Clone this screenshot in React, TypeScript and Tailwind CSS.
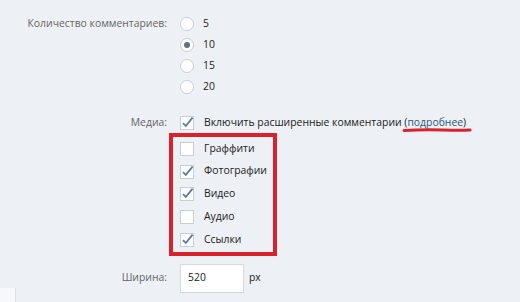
import React from "react";

function Radio({ checked }: { checked?: boolean }) {
  return (
    <span className="w-[14px] h-[14px] rounded-full border border-[#c8ced6] bg-white flex items-center justify-center shrink-0">
      {checked && <span className="w-[6px] h-[6px] rounded-full bg-[#5d7189]" />}
    </span>
  );
}

function Check({ checked }: { checked?: boolean }) {
  return (
    <svg width="15" height="15" viewBox="0 0 15 15" className="shrink-0">
      <rect x="0.5" y="1.5" width="13" height="13" fill="#fff" stroke="#c8ced6" />
      {checked && (
        <path d="M3 8.2 L5.8 11 L12.6 2.6" fill="none" stroke="#5a7ba0" strokeWidth="1.8" />
      )}
    </svg>
  );
}

const font = { fontFamily: '"Open Sans", "Noto Sans", sans-serif' };

export default function App() {
  const counts = [
    { v: "5" },
    { v: "10", on: true },
    { v: "15" },
    { v: "20" },
  ];
  const media = [
    { t: "Граффити" },
    { t: "Фотографии", on: true },
    { t: "Видео", on: true },
    { t: "Аудио" },
    { t: "Ссылки", on: true },
  ];

  return (
    <div
      className="w-[520px] h-[302px] bg-[#edf0f4] relative overflow-hidden text-[10.4px] text-[#222]"
      style={font}
    >
      <div className="flex pt-[13px]">
        <div className="w-[167px] text-right leading-[21px] text-[#666]">Количество комментариев:</div>
        <div className="ml-[13px] flex flex-col">
          {counts.map((c) => (
            <div key={c.v} className="h-[21px] flex items-center gap-[9px]">
              <Radio checked={c.on} />
              <span>{c.v}</span>
            </div>
          ))}
        </div>
      </div>

      <div className="flex mt-[15px]">
        <div className="w-[167px] text-right leading-[21px] text-[#666]">Медиа:</div>
        <div className="ml-[13px] flex flex-col">
          <div className="h-[21px] flex items-center gap-[9px]">
            <Check checked />
            <span>
              Включить расширенные комментарии{" "}
              <span className="relative">
                (<span className="text-[#2b587a]">подробнее</span>)
                <svg
                  className="absolute left-[-2px] top-[12px]"
                  width="70"
                  height="6"
                  viewBox="0 0 70 6"
                >
                  <path d="M2 3.5 Q20 2.5 40 3 T68 3" stroke="#d9222d" strokeWidth="3" fill="none" strokeLinecap="round" />
                </svg>
              </span>
            </span>
          </div>
          <div className="ml-[-11px] w-[108px] border-4 border-[#d9222d] pl-[7px] pt-[0px] pb-[1px]">
            {media.map((m) => (
              <div key={m.t} className="h-[22.75px] flex items-center gap-[9px]">
                <Check checked={m.on} />
                <span>{m.t}</span>
              </div>
            ))}
          </div>
        </div>
      </div>

      <div className="flex mt-[8px] items-center">
        <div className="w-[167px] text-right text-[#666]">Ширина:</div>
        <div className="ml-[13px] flex items-center gap-[5px]">
          <div className="w-[64px] h-[29px] bg-white border border-[#d3d9de] pl-[7px] flex items-center">520</div>
          <span>px</span>
        </div>
      </div>

      <div className="absolute left-0 top-[288px] w-[16px] h-[14px] bg-[#f7f8fa] border-r border-[#dde2e8]" />
    </div>
  );
}
